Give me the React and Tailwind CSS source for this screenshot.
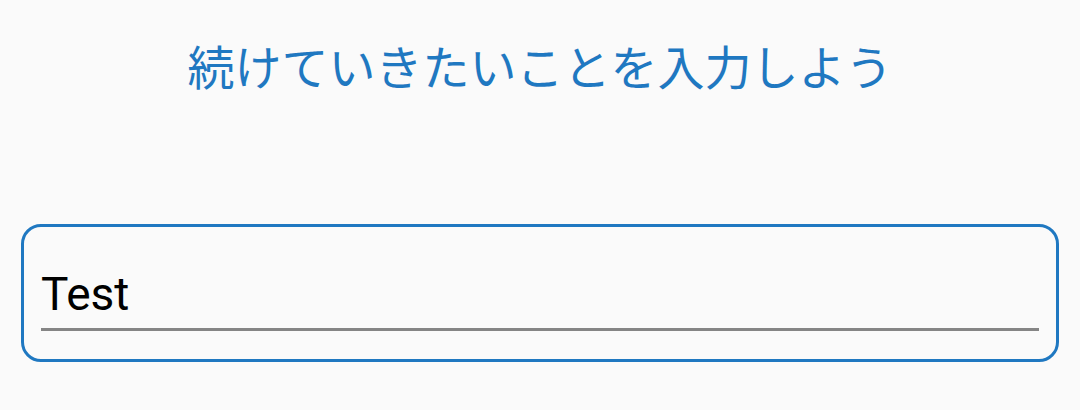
export default function App() {
  return (
    <div className="w-[1080px] h-[410px] bg-[#fafafa] overflow-hidden flex flex-col">
      <div className="pt-[31px] h-[99px] text-center text-[47px] leading-[68px] text-[#1f78c1] [font-family:'Noto_Sans_CJK_JP','Noto_Sans',sans-serif]">
        続けていきたいことを入力しよう
      </div>
      <div className="mt-[125px] mx-[21px] h-[138px] border-[3px] border-[#1f78c1] rounded-[20px] px-[17px] flex flex-col">
        <div className="mt-[42px] h-[62px] flex items-end pb-[7px] border-b-[3px] border-[#858585]">
          <span className="text-[46px] leading-[54px] text-black [font-family:Roboto,sans-serif]">Test</span>
        </div>
      </div>
    </div>
  );
}
